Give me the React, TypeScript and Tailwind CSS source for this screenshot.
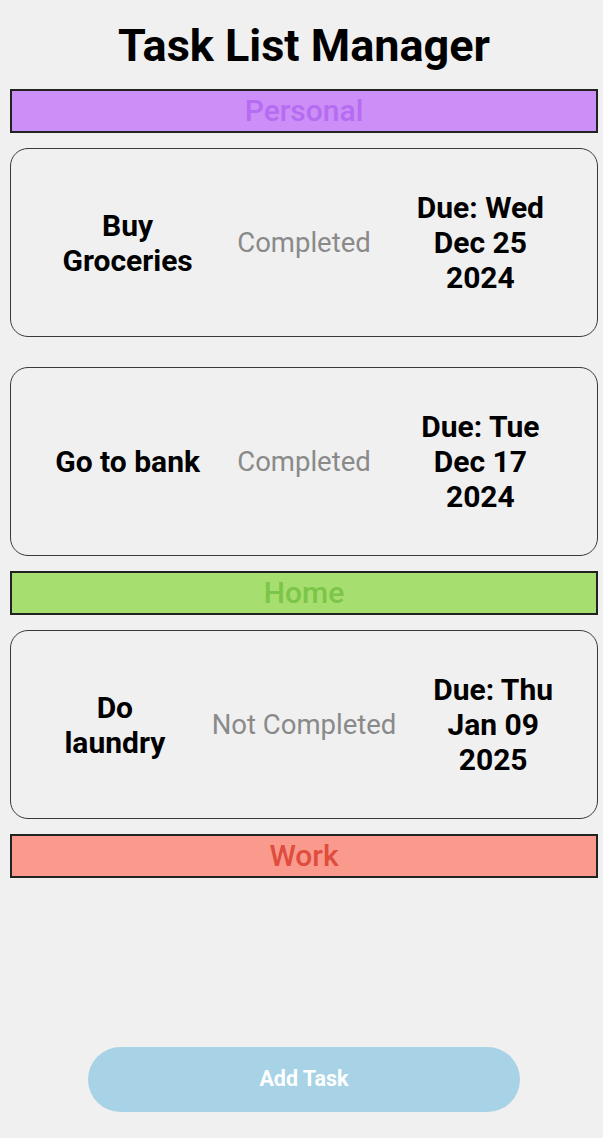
import React from 'react';

interface Task {
  name: string[];
  done: boolean;
  due: string[];
}

interface Group {
  title: string;
  bar: string;
  text: string;
  tasks: Task[];
}

const groups: Group[] = [
  {
    title: 'Personal',
    bar: 'bg-[#cc8ef7]',
    text: 'text-[#b56cf0]',
    tasks: [
      { name: ['Buy', 'Groceries'], done: true, due: ['Due: Wed', 'Dec 25', '2024'] },
      { name: ['Go to bank'], done: true, due: ['Due: Tue', 'Dec 17', '2024'] },
    ],
  },
  {
    title: 'Home',
    bar: 'bg-[#a6de70]',
    text: 'text-[#7cc548]',
    tasks: [{ name: ['Do', 'laundry'], done: false, due: ['Due: Thu', 'Jan 09', '2025'] }],
  },
  {
    title: 'Work',
    bar: 'bg-[#f99a8d]',
    text: 'text-[#de4d3d]',
    tasks: [],
  },
];

const TaskCard: React.FC<{ task: Task }> = ({ task }) => (
  <div className="my-[15px] flex items-center rounded-[18px] border-[1.5px] border-[#3a3a3a] px-[7px] py-[41px]">
    <div className="flex-1 text-center text-[30px] font-bold leading-[35px] text-black">
      {task.name.map((line) => (
        <div key={line}>{line}</div>
      ))}
    </div>
    <div className="text-center text-[27.5px] leading-[35px] text-[#8a8a8a]">
      {task.done ? 'Completed' : 'Not Completed'}
    </div>
    <div className="flex-1 text-center text-[30px] font-bold leading-[35px] text-black">
      {task.due.map((line) => (
        <div key={line}>{line}</div>
      ))}
    </div>
  </div>
);

export default function App() {
  return (
    <div className="flex min-h-screen flex-col bg-[#f0f0f0] pl-[10px] pr-[5px] font-['Roboto',sans-serif]">
      <h1 className="pt-[16px] pb-[13px] text-center text-[45px] font-bold leading-[60px] text-black">
        Task List Manager
      </h1>

      {groups.map((group) => (
        <div key={group.title} className="flex flex-col">
          <div
            className={`flex h-[44px] items-center justify-center border-2 border-[#222] ${group.bar}`}
          >
            <span className={`text-[30px] font-medium leading-none ${group.text}`}>{group.title}</span>
          </div>
          {group.tasks.map((task) => (
            <TaskCard key={task.name.join(' ')} task={task} />
          ))}
        </div>
      ))}

      {/* Add button sits at the bottom */}
      <div className="mt-auto flex justify-center pb-[26px]">
        <button className="h-[65px] w-[432px] rounded-full bg-[#a8d2e5] text-[21.5px] font-bold text-white">
          Add Task
        </button>
      </div>
    </div>
  );
}
